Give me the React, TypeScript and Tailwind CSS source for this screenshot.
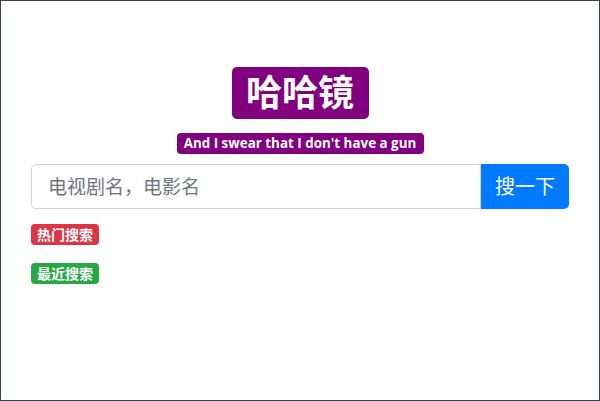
import React from "react";

export default function App() {
  const font = { fontFamily: '"Noto Sans", "Noto Sans CJK SC", sans-serif' };
  return (
    <div
      className="w-[600px] h-[401px] box-border border border-[#36424a] bg-white overflow-hidden"
      style={font}
    >
      <div className="px-[30px] flex flex-col">
        <div className="flex justify-center mt-[66px]">
          <span className="flex items-center justify-center bg-[#800080] text-white font-bold text-[36px] leading-none w-[137px] h-[52px] rounded-[5px]">
            哈哈镜
          </span>
        </div>
        <div className="flex justify-center mt-[14px]">
          <span
            className="flex items-center justify-center bg-[#800080] text-white font-bold text-[13.4px] leading-none w-[247px] h-[21px] rounded-[4px]"
            style={{ fontFamily: '"Open Sans", "Noto Sans", sans-serif' }}
          >
            And I swear that I don't have a gun
          </span>
        </div>
        <div className="flex mt-[10px] h-[45px]">
          <input
            className="flex-1 min-w-0 h-full border border-[#ced4da] rounded-l-[5px] px-[16px] text-[19px] text-[#495057] placeholder:text-[#6c757d] outline-none"
            placeholder="电视剧名，电影名"
            style={font}
          />
          <button className="w-[88px] h-full bg-[#007bff] text-white text-[20px] rounded-r-[5px]">
            搜一下
          </button>
        </div>
        <div className="flex mt-[15px]">
          <span className="flex items-center justify-center bg-[#dc3545] text-white font-bold text-[14px] leading-none w-[68px] h-[21px] rounded-[4px]">
            热门搜索
          </span>
        </div>
        <div className="flex mt-[18px]">
          <span className="flex items-center justify-center bg-[#28a745] text-white font-bold text-[14px] leading-none w-[68px] h-[21px] rounded-[4px]">
            最近搜索
          </span>
        </div>
      </div>
    </div>
  );
}
